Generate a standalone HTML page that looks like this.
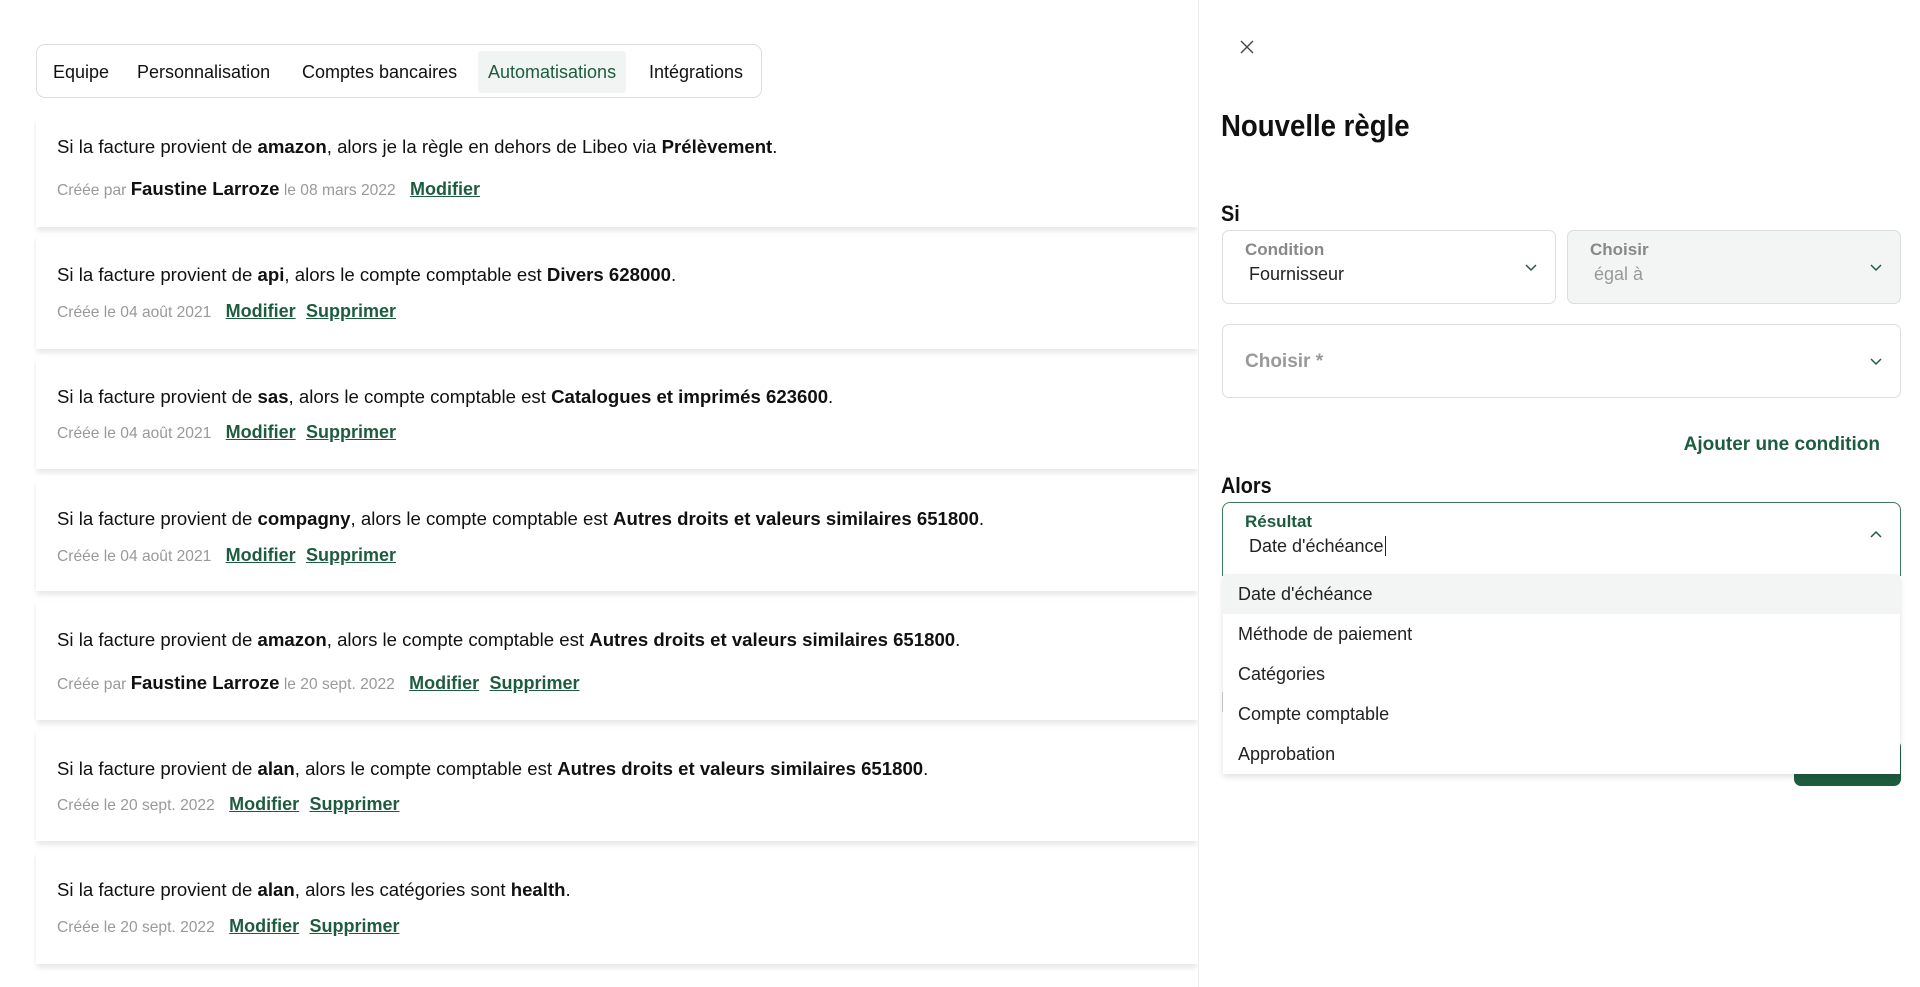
<!DOCTYPE html>
<html><head><meta charset="utf-8"><style>
*{box-sizing:border-box;margin:0;padding:0}
body{width:1920px;height:987px;overflow:hidden;background:#fff;font-family:"Liberation Sans",Arial,sans-serif;color:#111;position:relative}
.tabs{position:absolute;left:36px;top:44px;width:726px;height:54px;border:1px solid #ddd;border-radius:9px;}
.tab{position:absolute;top:6px;height:42px;line-height:42px;font-size:18px;color:#111}
.tab.act{background:#f0f4f2;color:#1e5c3f;border-radius:4px;padding:0 10px}
.card{position:absolute;left:36px;width:1162px;background:#fff;box-shadow:0 5px 5px -1px #e8e8e8, -2px 0 4px -2px #eee}
.card .t{position:absolute;left:21px;font-size:18.6px}
.card .m{position:absolute;left:21px;font-size:15.6px;color:#999;white-space:nowrap}
.m b{color:#111;font-size:18.6px}
.m a{color:#1e5c3f;font-weight:bold;font-size:18px;text-decoration:underline;margin-left:10px}
.panel{position:absolute;left:1198px;top:0;width:722px;height:987px;background:#fff;border-left:1px solid #eee}
.nar{font-family:"Liberation Sans Narrow","Liberation Sans",sans-serif;font-weight:bold}
.box{position:absolute;border:1px solid #ddd;border-radius:7px;background:#fff}
.lbl{position:absolute;left:22px;top:9px;font-size:16px;color:#888}
.val{position:absolute;left:26px;top:33px;font-size:18px;color:#222}
.chev{position:absolute;right:18px;width:12px;height:12px}
.opt{position:absolute;left:0;width:676px;height:40px;line-height:40px;padding-left:15px;font-size:18px;color:#222}
</style></head><body>
<div class="tabs">
<div class="tab" style="left:16px">Equipe</div>
<div class="tab" style="left:100px">Personnalisation</div>
<div class="tab" style="left:265px">Comptes bancaires</div>
<div class="tab act" style="left:441px">Automatisations</div>
<div class="tab" style="left:612px">Intégrations</div>
</div>

<div class="card" style="top:119px;height:108px"><div class="t" style="top:17px">Si la facture provient de <b>amazon</b>, alors je la règle en dehors de Libeo via <b>Prélèvement</b>.</div><div class="m" style="top:59px">Créée par <b>Faustine Larroze</b> le 08 mars 2022 <a>Modifier</a></div></div>
<div class="card" style="top:236px;height:113px"><div class="t" style="top:28px">Si la facture provient de <b>api</b>, alors le compte comptable est <b>Divers 628000</b>.</div><div class="m" style="top:65px">Créée le 04 août 2021 <a>Modifier</a> <a style="margin-left:6px">Supprimer</a></div></div>
<div class="card" style="top:359px;height:110px"><div class="t" style="top:27px">Si la facture provient de <b>sas</b>, alors le compte comptable est <b>Catalogues et imprimés 623600</b>.</div><div class="m" style="top:63px">Créée le 04 août 2021 <a>Modifier</a> <a style="margin-left:6px">Supprimer</a></div></div>
<div class="card" style="top:481px;height:110px"><div class="t" style="top:27px">Si la facture provient de <b>compagny</b>, alors le compte comptable est <b>Autres droits et valeurs similaires 651800</b>.</div><div class="m" style="top:64px">Créée le 04 août 2021 <a>Modifier</a> <a style="margin-left:6px">Supprimer</a></div></div>
<div class="card" style="top:602px;height:118px"><div class="t" style="top:27px">Si la facture provient de <b>amazon</b>, alors le compte comptable est <b>Autres droits et valeurs similaires 651800</b>.</div><div class="m" style="top:70px">Créée par <b>Faustine Larroze</b> le 20 sept. 2022 <a>Modifier</a> <a style="margin-left:6px">Supprimer</a></div></div>
<div class="card" style="top:731px;height:110px"><div class="t" style="top:27px">Si la facture provient de <b>alan</b>, alors le compte comptable est <b>Autres droits et valeurs similaires 651800</b>.</div><div class="m" style="top:63px">Créée le 20 sept. 2022 <a>Modifier</a> <a style="margin-left:6px">Supprimer</a></div></div>
<div class="card" style="top:852px;height:112px"><div class="t" style="top:27px">Si la facture provient de <b>alan</b>, alors les catégories sont <b>health</b>.</div><div class="m" style="top:64px">Créée le 20 sept. 2022 <a>Modifier</a> <a style="margin-left:6px">Supprimer</a></div></div>

<div class="panel">
<svg style="position:absolute;left:41px;top:40px" width="14" height="14" viewBox="0 0 14 14"><path d="M1 1L13 13M13 1L1 13" stroke="#444" stroke-width="1.4"/></svg>
<div class="nar" style="position:absolute;left:22px;top:108px;font-size:31px;color:#111;transform:scaleX(0.89);transform-origin:left">Nouvelle règle</div>
<div class="nar" style="position:absolute;left:22px;top:201px;font-size:22px;transform:scaleX(0.9);transform-origin:left">Si</div>
<div class="box" style="left:23px;top:230px;width:334px;height:74px"><div class="lbl nar" style="font-size:17px">Condition</div><div class="val">Fournisseur</div>
<svg class="chev" style="top:30px" viewBox="0 0 12 12"><path d="M1 4L6 9L11 4" fill="none" stroke="#1e5c3f" stroke-width="1.5"/></svg></div>
<div class="box" style="left:368px;top:230px;width:334px;height:74px;background:#f2f5f3"><div class="lbl nar" style="font-size:17px">Choisir</div><div class="val" style="color:#999">égal à</div>
<svg class="chev" style="top:30px" viewBox="0 0 12 12"><path d="M1 4L6 9L11 4" fill="none" stroke="#1e5c3f" stroke-width="1.5"/></svg></div>
<div class="box" style="left:23px;top:324px;width:679px;height:74px"><div class="nar" style="position:absolute;left:22px;top:26px;font-size:19px;color:#999">Choisir *</div>
<svg class="chev" style="top:30px" viewBox="0 0 12 12"><path d="M1 4L6 9L11 4" fill="none" stroke="#1e5c3f" stroke-width="1.5"/></svg></div>
<div class="nar" style="position:absolute;right:40px;top:434px;font-size:19px;color:#1e5c3f">Ajouter une condition</div>
<div class="nar" style="position:absolute;left:22px;top:473px;font-size:22px;transform:scaleX(0.9);transform-origin:left">Alors</div>
<div style="position:absolute;left:23px;top:692px;width:6px;height:20px;border:1px solid #ccc;border-right:none"></div>
<div style="position:absolute;left:595px;top:740px;width:107px;height:46px;background:#1e5c3f;border-radius:7px"></div>
<div class="box" style="left:23px;top:502px;width:679px;height:74px;border:1.5px solid #3d7a5a;border-radius:8px 8px 0 0;border-bottom:none"><div class="lbl nar" style="color:#1e5c3f;font-size:17px">Résultat</div><div class="val">Date d'échéance<span style="border-left:1.5px solid #222;margin-left:1px"></span></div>
<svg class="chev" style="top:26px" viewBox="0 0 12 12"><path d="M1 8L6 3L11 8" fill="none" stroke="#1e5c3f" stroke-width="1.5"/></svg></div>
<div style="position:absolute;left:24px;top:574px;width:677px;height:200px;background:#fff;box-shadow:0 3px 6px rgba(0,0,0,.12)">
<div class="opt" style="top:0;background:#f2f5f3;width:677px">Date d'échéance</div>
<div class="opt" style="top:40px">Méthode de paiement</div>
<div class="opt" style="top:80px">Catégories</div>
<div class="opt" style="top:120px">Compte comptable</div>
<div class="opt" style="top:160px">Approbation</div>
</div>
</div>
</body></html>
